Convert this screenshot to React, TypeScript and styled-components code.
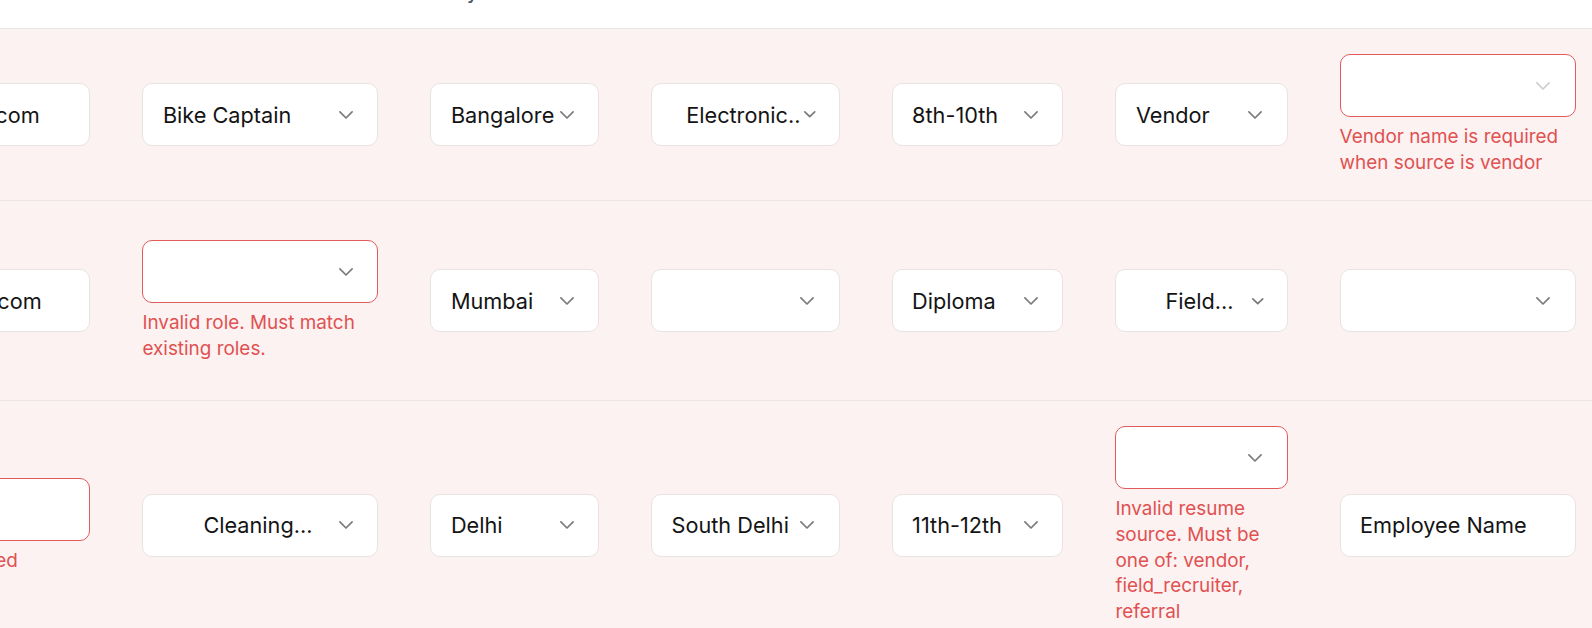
import React from "react";
import styled, { createGlobalStyle } from "styled-components";

const Global = createGlobalStyle`
  html, body { margin: 0; padding: 0; background: #ffffff; }
  body {
    font-family: Inter, "Noto Sans", "Liberation Sans", sans-serif;
    -webkit-font-smoothing: antialiased;
  }
`;

const Viewport = styled.div`
  width: 1592px;
  height: 628px;
  overflow: hidden;
  background: #ffffff;
`;

const Table = styled.div`
  display: flex;
  flex-direction: column;
  width: max-content;
  margin-top: -42px;
  margin-left: -155.6px;
`;

const HeaderRow = styled.div`
  display: flex;
  background: #ffffff;
  border-bottom: 1px solid #e9e5e5;
`;

const HeaderCell = styled.div<{ $w: number }>`
  flex: none;
  box-sizing: border-box;
  width: ${(p) => p.$w + 52}px;
  padding: 22px 26px 22px 37px;
  font-size: 19px;
  line-height: 26px;
  font-weight: 500;
  color: #4b5563;
  white-space: nowrap;
`;

const Row = styled.div<{ $minH?: number }>`
  display: flex;
  align-items: center;
  box-sizing: border-box;
  padding: 25px 0;
  min-height: ${(p) => (p.$minH ? `${p.$minH}px` : "auto")};
  background: #fdf2f2;
  border-bottom: 1px solid #ebe4e4;
`;

const Cell = styled.div<{ $w: number }>`
  flex: none;
  box-sizing: border-box;
  width: ${(p) => p.$w + 52}px;
  padding: 0 26px;
  display: flex;
  flex-direction: column;
`;

const Field = styled.div<{ $error?: boolean }>`
  box-sizing: border-box;
  height: 63px;
  display: flex;
  align-items: center;
  padding: 0 24.5px 0 19.5px;
  background: #ffffff;
  border: 1px solid ${(p) => (p.$error ? "#e15b5b" : "#e8e3e3")};
  border-radius: 10px;
  font-size: 21.7px;
  color: #141414;
`;

const Value = styled.span<{ $center?: boolean; $chev: number }>`
  flex: 1;
  min-width: 0;
  white-space: nowrap;
  text-align: ${(p) => (p.$center ? "center" : "left")};
  margin-right: ${(p) => (p.$center ? -p.$chev : 6)}px;
`;

const Chevron = styled.svg<{ $muted?: boolean; $small?: boolean }>`
  flex: none;
  width: ${(p) => (p.$small ? 11.5 : 14)}px;
  height: ${(p) => (p.$small ? 6.5 : 8)}px;
  margin-right: ${(p) => (p.$small ? -1 : 0)}px;
  fill: none;
  stroke: ${(p) => (p.$muted ? "#cdcdcd" : "#7b7b7b")};
  stroke-width: 1.7;
  stroke-linecap: round;
  stroke-linejoin: round;
  overflow: visible;
`;

const ErrorText = styled.div`
  margin-top: 7px;
  font-size: 18.9px;
  line-height: 25.6px;
  color: #e05151;
`;

type CellData = {
  kind: "input" | "select";
  value?: string;
  error?: string;
  center?: boolean;
  small?: boolean;
  muted?: boolean;
};

const columns = [
  { header: "Email", w: 220 },
  { header: "Role", w: 236 },
  { header: "City", w: 168.6 },
  { header: "Area", w: 188.6 },
  { header: "Education", w: 171.8 },
  { header: "Source", w: 172.2 },
  { header: "Vendor Name", w: 236.2 },
];

const rows: { minH?: number; cells: CellData[] }[] = [
  {
    cells: [
      { kind: "input", value: "anil@mail.com" },
      { kind: "select", value: "Bike Captain" },
      { kind: "select", value: "Bangalore" },
      { kind: "select", value: "Electronic..", center: true, small: true },
      { kind: "select", value: "8th-10th" },
      { kind: "select", value: "Vendor" },
      {
        kind: "select",
        muted: true,
        error: "Vendor name is required when source is vendor",
      },
    ],
  },
  {
    minH: 200.3,
    cells: [
      { kind: "input", value: "ravi@mail.com" },
      { kind: "select", error: "Invalid role. Must match existing roles." },
      { kind: "select", value: "Mumbai" },
      { kind: "select" },
      { kind: "select", value: "Diploma" },
      { kind: "select", value: "Field...", center: true, small: true },
      { kind: "select" },
    ],
  },
  {
    cells: [
      { kind: "input", error: "Email is required" },
      { kind: "select", value: "Cleaning...", center: true },
      { kind: "select", value: "Delhi" },
      { kind: "select", value: "South Delhi" },
      { kind: "select", value: "11th-12th" },
      {
        kind: "select",
        error:
          "Invalid resume source. Must be one of: vendor, field_recruiter, referral",
      },
      { kind: "input", value: "Employee Name" },
    ],
  },
];

function ChevronIcon({ muted, small }: { muted?: boolean; small?: boolean }) {
  return small ? (
    <Chevron $muted={muted} $small viewBox="0 0 11.5 6.5">
      <path d="M0.8 0.8 L5.75 5.7 L10.7 0.8" />
    </Chevron>
  ) : (
    <Chevron $muted={muted} viewBox="0 0 14 8">
      <path d="M0.9 0.9 L7 7 L13.1 0.9" />
    </Chevron>
  );
}

function GridCell({ data, w }: { data: CellData; w: number }) {
  const chevW = data.small ? 11.5 : 14;
  return (
    <Cell $w={w}>
      <Field $error={!!data.error}>
        <Value $center={data.center} $chev={chevW}>
          {data.value ?? ""}
        </Value>
        {data.kind === "select" && (
          <ChevronIcon muted={data.muted} small={data.small} />
        )}
      </Field>
      {data.error && <ErrorText>{data.error}</ErrorText>}
    </Cell>
  );
}

export default function App() {
  return (
    <>
      <Global />
      <Viewport>
        <Table>
          <HeaderRow>
            {columns.map((c) => (
              <HeaderCell key={c.header} $w={c.w}>
                {c.header}
              </HeaderCell>
            ))}
          </HeaderRow>
          {rows.map((r, i) => (
            <Row key={i} $minH={r.minH}>
              {r.cells.map((c, j) => (
                <GridCell key={j} data={c} w={columns[j].w} />
              ))}
            </Row>
          ))}
        </Table>
      </Viewport>
    </>
  );
}
